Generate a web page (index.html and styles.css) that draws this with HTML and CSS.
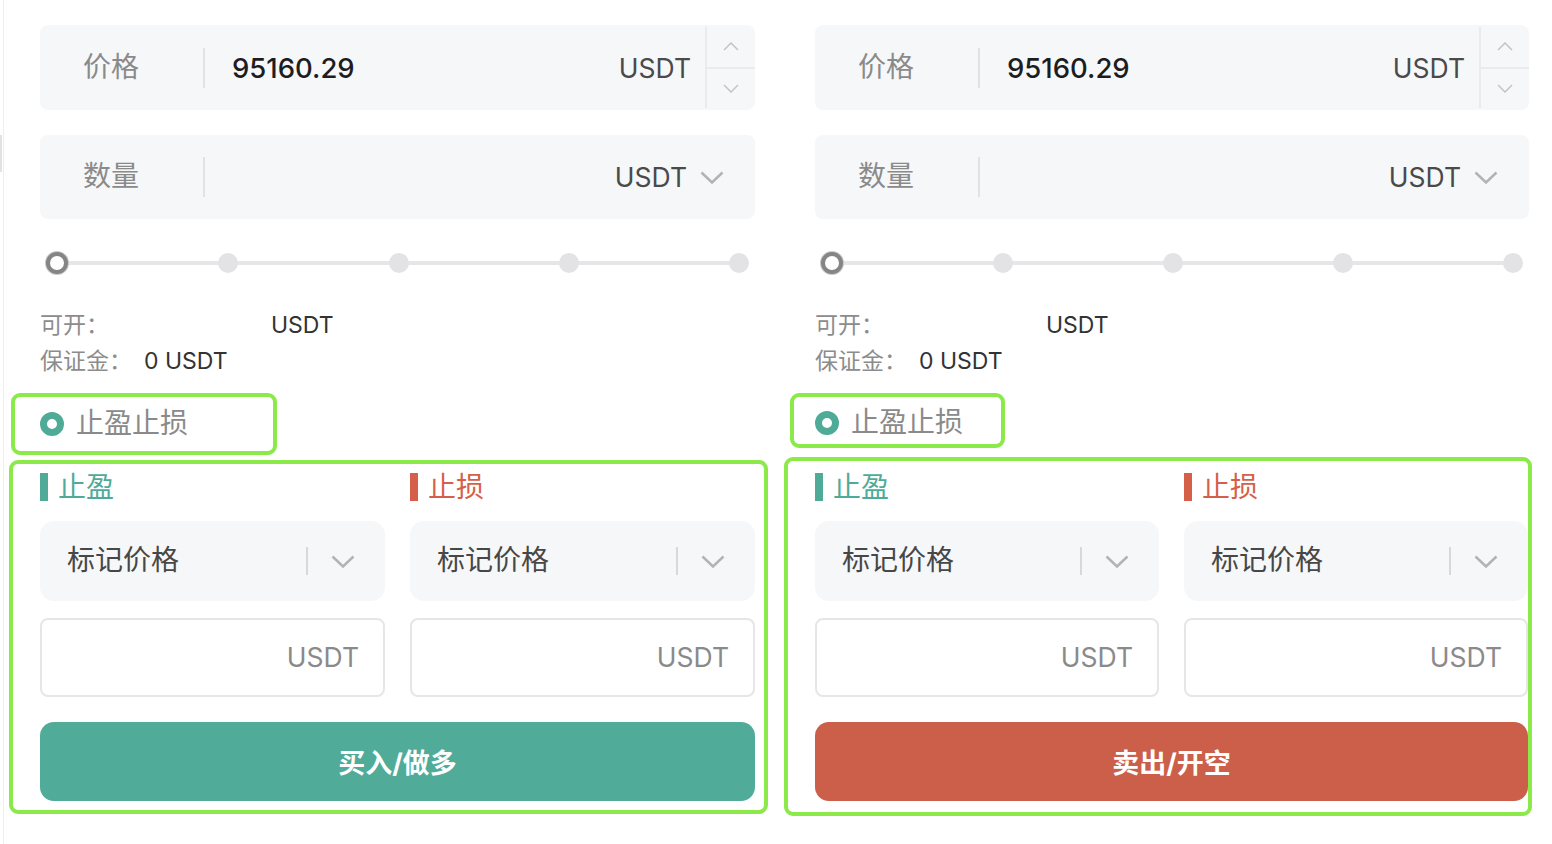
FILE: index.html
```html
<!DOCTYPE html>
<html lang="zh-CN">
<head>
  <meta charset="UTF-8">
  <meta name="viewport" content="width=device-width, initial-scale=1.0">
  <title>合约下单</title>
  <link rel="stylesheet" href="styles.css">
</head>
<body>
  <div class="rail"><div class="rail-tab"></div></div>

  <div class="panels">
    <!-- 买入 -->
    <div class="panel">
      <div class="field">
        <span class="field-label">价格</span>
        <span class="field-sep"></span>
        <span class="field-value">95160.29</span>
        <span class="field-unit">USDT</span>
        <div class="stepper">
          <span class="step"><svg width="16" height="9" viewBox="0 0 16 9"><path d="M1 8 L8 1 L15 8" /></svg></span>
          <span class="step"><svg width="16" height="9" viewBox="0 0 16 9"><path d="M1 1 L8 8 L15 1" /></svg></span>
        </div>
      </div>

      <div class="field field-qty">
        <span class="field-label">数量</span>
        <span class="field-sep"></span>
        <span class="field-value"></span>
        <span class="field-unit">USDT</span>
        <svg class="caret" width="24" height="13" viewBox="0 0 24 13"><path d="M1.5 1.5 L12 11.5 L22.5 1.5" /></svg>
      </div>

      <div class="slider">
        <span class="dot dot-on"></span>
        <span class="dot"></span>
        <span class="dot"></span>
        <span class="dot"></span>
        <span class="dot"></span>
      </div>

      <div class="info">
        <p><span class="info-label">可开：</span><span class="info-value"><span class="mask"></span>USDT</span></p>
        <p><span class="info-label">保证金：</span><span class="info-value">0 USDT</span></p>
      </div>

      <div class="mark mark-toggle">
        <span class="radio"></span>
        <span class="toggle-text">止盈止损</span>
      </div>

      <div class="mark mark-tpsl">
        <div class="tpsl">
          <div class="tpsl-col">
            <div class="tpsl-head tp">止盈</div>
            <div class="select">
              <span class="select-text">标记价格</span>
              <span class="select-sep"></span>
              <svg class="caret" width="24" height="13" viewBox="0 0 24 13"><path d="M1.5 1.5 L12 11.5 L22.5 1.5" /></svg>
            </div>
            <div class="input">USDT</div>
          </div>
          <div class="tpsl-col">
            <div class="tpsl-head sl">止损</div>
            <div class="select">
              <span class="select-text">标记价格</span>
              <span class="select-sep"></span>
              <svg class="caret" width="24" height="13" viewBox="0 0 24 13"><path d="M1.5 1.5 L12 11.5 L22.5 1.5" /></svg>
            </div>
            <div class="input">USDT</div>
          </div>
        </div>
        <button class="submit buy">买入/做多</button>
      </div>
    </div>

    <!-- 卖出 -->
    <div class="panel panel-sell">
      <div class="field">
        <span class="field-label">价格</span>
        <span class="field-sep"></span>
        <span class="field-value">95160.29</span>
        <span class="field-unit">USDT</span>
        <div class="stepper">
          <span class="step"><svg width="16" height="9" viewBox="0 0 16 9"><path d="M1 8 L8 1 L15 8" /></svg></span>
          <span class="step"><svg width="16" height="9" viewBox="0 0 16 9"><path d="M1 1 L8 8 L15 1" /></svg></span>
        </div>
      </div>

      <div class="field field-qty">
        <span class="field-label">数量</span>
        <span class="field-sep"></span>
        <span class="field-value"></span>
        <span class="field-unit">USDT</span>
        <svg class="caret" width="24" height="13" viewBox="0 0 24 13"><path d="M1.5 1.5 L12 11.5 L22.5 1.5" /></svg>
      </div>

      <div class="slider">
        <span class="dot dot-on"></span>
        <span class="dot"></span>
        <span class="dot"></span>
        <span class="dot"></span>
        <span class="dot"></span>
      </div>

      <div class="info">
        <p><span class="info-label">可开：</span><span class="info-value"><span class="mask"></span>USDT</span></p>
        <p><span class="info-label">保证金：</span><span class="info-value">0 USDT</span></p>
      </div>

      <div class="mark mark-toggle">
        <span class="radio"></span>
        <span class="toggle-text">止盈止损</span>
      </div>

      <div class="mark mark-tpsl">
        <div class="tpsl">
          <div class="tpsl-col">
            <div class="tpsl-head tp">止盈</div>
            <div class="select">
              <span class="select-text">标记价格</span>
              <span class="select-sep"></span>
              <svg class="caret" width="24" height="13" viewBox="0 0 24 13"><path d="M1.5 1.5 L12 11.5 L22.5 1.5" /></svg>
            </div>
            <div class="input">USDT</div>
          </div>
          <div class="tpsl-col">
            <div class="tpsl-head sl">止损</div>
            <div class="select">
              <span class="select-text">标记价格</span>
              <span class="select-sep"></span>
              <svg class="caret" width="24" height="13" viewBox="0 0 24 13"><path d="M1.5 1.5 L12 11.5 L22.5 1.5" /></svg>
            </div>
            <div class="input">USDT</div>
          </div>
        </div>
        <button class="submit sell">卖出/开空</button>
      </div>
    </div>
  </div>
</body>
</html>
```

FILE: styles.css
```css
* {
  box-sizing: border-box;
}
body {
  margin: 0;
  display: flex;
  min-height: 844px;
  background: #fff;
  font-family: Inter, "Noto Sans CJK SC", sans-serif;
  color: #333;
}
p {
  margin: 0;
}

.rail {
  width: 4px;
  border-right: 1px solid #eeeeef;
  flex-shrink: 0;
}
.rail-tab {
  width: 2px;
  height: 37px;
  margin-top: 135px;
  background: #e2e2e6;
}

.panels {
  display: flex;
  gap: 60px;
  margin-left: 36px;
  padding-top: 25px;
}
.panel {
  width: 715px;
}
.panel-sell {
  width: 714px;
}

/* 价格 / 数量 输入框 */
.field {
  display: flex;
  align-items: center;
  height: 85px;
  padding-left: 43px;
  background: #f6f7f9;
  border-radius: 8px;
}
.field-qty {
  height: 84px;
  margin-top: 25px;
  padding-right: 31px;
}
.field-label {
  width: 120px;
  font-size: 28px;
  line-height: 36px;
  margin-top: -2px;
  color: #8a8a8a;
}
.field-sep {
  width: 2px;
  height: 40px;
  background: #e2e2e4;
}
.field-value {
  flex: 1;
  padding-left: 27px;
  font-size: 27.5px;
  font-weight: 500;
  color: #1d1d1f;
}
.field-unit {
  font-size: 26.5px;
  color: #4a4a4a;
  margin-right: 14px;
}
.field-qty .field-unit {
  margin-right: 13px;
}
.stepper {
  display: flex;
  flex-direction: column;
  align-self: stretch;
  width: 50px;
  margin: 2px 0;
  border-left: 2px solid #ebebed;
}
.step {
  flex: 1;
  display: flex;
  align-items: center;
  justify-content: center;
}
.step:first-child {
  border-bottom: 2px solid #ebebed;
}
.step svg path {
  fill: none;
  stroke: #c4c4c6;
  stroke-width: 1.5;
}
.caret path {
  fill: none;
  stroke: #b3b3b5;
  stroke-width: 2.5;
}

/* 滑块 */
.slider {
  display: flex;
  justify-content: space-between;
  align-items: center;
  height: 22px;
  margin-top: 33px;
  padding: 0 6px;
  background: linear-gradient(#e6e6e8, #e6e6e8) center / calc(100% - 32px) 4px no-repeat;
}
.dot {
  width: 20px;
  height: 20px;
  border-radius: 50%;
  background: #e3e3e5;
}
.dot-on {
  width: 22px;
  height: 22px;
  background: #fff;
  border: 4px solid #858585;
  box-shadow: 0 0 0 1px #c8c8c8;
}

/* 可开 / 保证金 */
.info {
  margin-top: 33px;
  font-size: 23px;
  line-height: 36px;
}
.info-label {
  color: #8c8c8c;
}
.info-value {
  margin-left: 12px;
  color: #333;
}
.mask {
  display: inline-block;
  width: 150px;
}

/* 标注框 */
.mark {
  border: 4px solid #8be94a;
  border-radius: 9px;
}
.mark-toggle {
  display: flex;
  align-items: center;
  width: 266px;
  height: 62px;
  margin-top: 14px;
  margin-left: -29px;
  padding-left: 25px;
}
.panel-sell .mark-toggle {
  width: 215px;
  height: 55px;
  margin-left: -25px;
  padding-left: 21px;
  padding-top: 5px;
}
.radio {
  width: 24px;
  height: 24px;
  border-radius: 50%;
  background: #fff;
  border: 7px solid #4fab98;
}
.toggle-text {
  margin-left: 12px;
  font-size: 28px;
  line-height: 36px;
  margin-top: -2px;
  color: #8a8a8a;
}

.mark-tpsl {
  margin: 5px -13px 0 -31px;
  padding: 9px 9px 9px 27px;
}
.panel-sell .mark-tpsl {
  margin: 9px -3px 0 -31px;
  padding: 12px 0 11px 27px;
}
.tpsl {
  display: grid;
  grid-template-columns: 1fr 1fr;
  gap: 25px;
}
.tpsl-head {
  display: flex;
  align-items: center;
  height: 28px;
  font-size: 28px;
  line-height: 28px;
}
.tpsl-head::before {
  content: "";
  width: 8px;
  height: 28px;
  margin-right: 10px;
}
.tp {
  color: #4fab98;
}
.tp::before {
  background: #4fab98;
}
.sl {
  color: #d5604a;
}
.sl::before {
  background: #d5604a;
}

.select {
  display: flex;
  align-items: center;
  height: 80px;
  margin-top: 20px;
  padding-left: 27px;
  padding-right: 30px;
  background: #f6f7f9;
  border-radius: 14px;
}
.select-text {
  flex: 1;
  font-size: 28px;
  line-height: 36px;
  margin-top: -2px;
  color: #474747;
}
.select-sep {
  width: 2px;
  height: 28px;
  margin-right: 23px;
  background: #d8d8da;
}
.input {
  height: 79px;
  margin-top: 17px;
  padding-right: 24px;
  border: 2px solid #e6e6e8;
  border-radius: 8px;
  font-size: 26.5px;
  line-height: 75px;
  text-align: right;
  color: #8a8a8a;
}

.submit {
  display: block;
  width: 100%;
  height: 79px;
  margin-top: 25px;
  border: none;
  border-radius: 14px;
  font-family: inherit;
  font-size: 27px;
  font-weight: 700;
  color: #fff;
  cursor: pointer;
}
.buy {
  background: #50ab99;
}
.sell {
  background: #cb5f4a;
}
```
